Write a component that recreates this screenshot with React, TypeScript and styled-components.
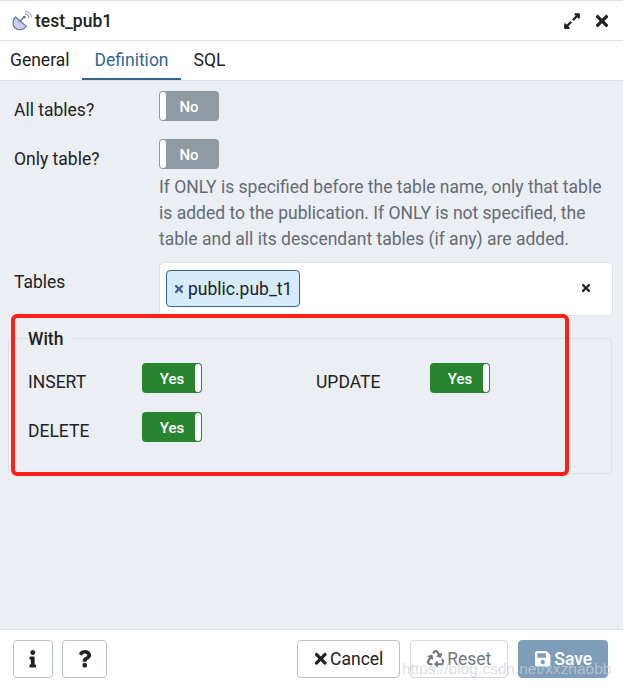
import React from "react";
import styled, { createGlobalStyle } from "styled-components";
import { FaExpandAlt, FaTimes, FaInfo, FaQuestion, FaRecycle, FaSave } from "react-icons/fa";

const Global = createGlobalStyle`
  html, body { margin: 0; padding: 0; background: #fff; }
  body { font-family: Roboto, "Liberation Sans", sans-serif; color: #222; font-size: 17.5px; }
  #root { width: 625px; height: 688px; }
`;

const Dialog = styled.div`
  position: relative;
  width: 623px;
  height: 688px;
  display: flex;
  flex-direction: column;
  box-sizing: border-box;
  border-top: 1px solid #dde0e6;
  overflow: hidden;
`;

const Header = styled.div`
  height: 39px;
  flex: none;
  display: flex;
  align-items: center;
  padding: 0 12px 0 12px;
  border-bottom: 1px solid #dde0e6;
  background: #fff;
`;

const Title = styled.div`
  flex: 1;
  display: flex;
  align-items: center;
  gap: 3px;
  font-weight: 500;
  color: #222;
`;

const HeaderIcons = styled.div`
  display: flex;
  align-items: center;
  gap: 12px;
  color: #222;
  font-size: 18px;
`;

const Tabs = styled.div`
  height: 39px;
  flex: none;
  display: flex;
  border-bottom: 1px solid #dde0e6;
  background: #fff;
`;

const Tab = styled.div<{ $active?: boolean }>`
  box-sizing: border-box;
  height: 39px;
  padding: 0 12px 0 13px;
  display: flex;
  align-items: center;
  color: ${p => (p.$active ? "#326690" : "#222")};
  border-bottom: 2px solid ${p => (p.$active ? "#326690" : "transparent")};
  &:first-child {
    padding: 0 12px 0 10px;
  }
`;

const Body = styled.div`
  flex: 1;
  background: #ebeef3;
  box-sizing: border-box;
  padding: 10px 10px 0 14px;
  display: flex;
  flex-direction: column;
`;

const Row = styled.div<{ $h: number }>`
  display: flex;
  align-items: flex-start;
  min-height: ${p => p.$h}px;
`;

const Label = styled.div<{ $top?: number }>`
  width: 145px;
  flex: none;
  line-height: 20px;
  padding-top: ${p => p.$top ?? 10}px;
  color: #222;
`;

const SwitchBox = styled.div<{ $on?: boolean }>`
  position: relative;
  box-sizing: border-box;
  width: 60px;
  height: 30px;
  flex: none;
  border-radius: 4px;
  background: ${p => (p.$on ? "#26852e" : "#8f9aa5")};
  color: #fff;
  font-size: 15px;
  font-weight: 500;
  display: flex;
  align-items: center;
  justify-content: center;
  padding-top: 1px;
`;

const Knob = styled.span<{ $on?: boolean }>`
  position: absolute;
  top: 1px;
  bottom: 1px;
  width: 6px;
  background: #fff;
  border-radius: 3px;
  ${p => (p.$on ? "right: 1px;" : "left: 1px;")}
`;

const Switch = ({ on }: { on?: boolean }) => (
  <SwitchBox $on={on}>
    {on ? "Yes" : "No"}
    <Knob $on={on} />
  </SwitchBox>
);

const Field = styled.div`
  display: flex;
  flex-direction: column;
`;

const Help = styled.div`
  width: 454px;
  line-height: 26px;
  color: #646b73;
  margin-top: 5px;
`;

const TablesBox = styled.div`
  box-sizing: border-box;
  width: 454px;
  height: 54px;
  background: #fff;
  border: 1px solid #dde0e6;
  border-radius: 4px;
  display: flex;
  align-items: center;
  justify-content: space-between;
  padding: 0 20px 0 6px;
`;

const Chip = styled.div`
  box-sizing: border-box;
  height: 37px;
  display: flex;
  align-items: center;
  gap: 3px;
  padding: 0 7px 0 6px;
  background: #d6ebfb;
  border: 1px solid #326690;
  border-radius: 4px;
  color: #222;
  margin-top: -1px;
`;

const ChipX = styled.span`
  display: flex;
  color: #326690;
  font-size: 12px;
`;

const ClearX = styled.span`
  display: flex;
  color: #222;
  font-size: 12px;
  margin-top: -2px;
`;

const Fieldset = styled.fieldset`
  box-sizing: border-box;
  width: 604px;
  height: 147px;
  margin: 11px 0 0 -6px;
  padding: 3px 0 0 19px;
  border: 1px solid #dde0e6;
  border-radius: 4px;
  min-width: 0;
`;

const Legend = styled.legend`
  font-weight: 500;
  padding: 2px 7px 0 0;
  color: #222;
  line-height: 20px;
`;

const OptionGrid = styled.div`
  display: grid;
  grid-template-columns: 288px 1fr;
  grid-auto-rows: 49px;
  margin-top: 11px;
`;

const Option = styled.div`
  display: flex;
  align-items: flex-start;
`;

const OptionLabel = styled.div`
  width: 114px;
  flex: none;
  line-height: 20px;
  padding-top: 9px;
  color: #222;
`;

const Footer = styled.div`
  height: 59px;
  flex: none;
  box-sizing: border-box;
  background: #fff;
  border-top: 1px solid #dde0e6;
  display: flex;
  align-items: flex-start;
  justify-content: space-between;
  padding: 10px 15px 0 13px;
`;

const ButtonGroup = styled.div<{ $gap: number }>`
  display: flex;
  gap: ${p => p.$gap}px;
`;

const Button = styled.div<{ $w: number; $variant?: "disabled" | "primary"; $tight?: boolean }>`
  box-sizing: border-box;
  width: ${p => p.$w}px;
  height: 38px;
  display: flex;
  align-items: center;
  justify-content: center;
  gap: ${p => (p.$tight ? 1 : 3)}px;
  padding-right: ${p => (p.$tight ? 2 : 0)}px;
  border-radius: 4px;
  border: 1px solid
    ${p => (p.$variant === "disabled" ? "#d4d7e0" : p.$variant === "primary" ? "#7d9db8" : "#b9bfce")};
  background: ${p => (p.$variant === "primary" ? "#7d9db8" : "#fff")};
  color: ${p => (p.$variant === "disabled" ? "#72767b" : p.$variant === "primary" ? "#fff" : "#222")};
  font-weight: ${p => (p.$variant === "primary" ? 500 : 400)};
`;

const Annotation = styled.div`
  position: absolute;
  left: 11px;
  top: 313px;
  width: 558px;
  height: 162px;
  box-sizing: border-box;
  border: 4px solid #fd2019;
  border-radius: 6px;
  pointer-events: none;
`;

const Watermark = styled.div`
  position: absolute;
  left: 402px;
  top: 659px;
  font-family: "Liberation Sans", sans-serif;
  font-size: 15.5px;
  color: rgba(205, 210, 215, 0.72);
  white-space: nowrap;
  pointer-events: none;
`;

const Dish = () => (
  <svg width="20" height="20" viewBox="0 0 20 20" fill="none">
    <path d="M3.5 6 L14.5 15.5 C11.5 19.5 5.5 19.8 2.6 16.6 C0 13.5 0.8 8.8 3.5 6 Z" fill="#c9cfe9" stroke="#5a6bb0" strokeWidth="1.1" />
    <path d="M7.5 11 L11.5 6.5" stroke="#5a6bb0" strokeWidth="1.2" />
    <circle cx="12.3" cy="6" r="1.3" fill="#4a5a9f" />
    <path d="M13 2.8 C15.2 3.1 16.8 4.8 17 7" stroke="#5a6bb0" strokeWidth="1" />
    <path d="M13.5 0.4 C16.8 0.7 19.1 3 19.5 6.4" stroke="#8c97c8" strokeWidth="1" />
  </svg>
);

export default function App() {
  return (
    <>
      <Global />
      <Dialog>
        <Header>
          <Title>
            <Dish />
            test_pub1
          </Title>
          <HeaderIcons>
            <FaExpandAlt />
            <FaTimes />
          </HeaderIcons>
        </Header>
        <Tabs>
          <Tab>General</Tab>
          <Tab $active>Definition</Tab>
          <Tab>SQL</Tab>
        </Tabs>
        <Body>
          <Row $h={48}>
            <Label $top={9}>All tables?</Label>
            <Switch />
          </Row>
          <Row $h={123}>
            <Label>Only table?</Label>
            <Field>
              <Switch />
              <Help>
                If ONLY is specified before the table name, only that table is added to the publication. If ONLY is not specified, the table and all its descendant tables (if any) are added.
              </Help>
            </Field>
          </Row>
          <Row $h={54}>
            <Label>Tables</Label>
            <TablesBox>
              <Chip>
                <ChipX><FaTimes /></ChipX>
                public.pub_t1
              </Chip>
              <ClearX><FaTimes /></ClearX>
            </TablesBox>
          </Row>
          <Fieldset>
            <Legend>With</Legend>
            <OptionGrid>
              <Option>
                <OptionLabel>INSERT</OptionLabel>
                <Switch on />
              </Option>
              <Option>
                <OptionLabel>UPDATE</OptionLabel>
                <Switch on />
              </Option>
              <Option>
                <OptionLabel>DELETE</OptionLabel>
                <Switch on />
              </Option>
            </OptionGrid>
          </Fieldset>
        </Body>
        <Footer>
          <ButtonGroup $gap={9}>
            <Button $w={40}><FaInfo /></Button>
            <Button $w={45}><FaQuestion /></Button>
          </ButtonGroup>
          <ButtonGroup $gap={10}>
            <Button $w={103} $tight><FaTimes />Cancel</Button>
            <Button $w={98} $variant="disabled"><FaRecycle />Reset</Button>
            <Button $w={90} $variant="primary"><FaSave />Save</Button>
          </ButtonGroup>
        </Footer>
        <Annotation />
        <Watermark>https://blog.csdn.net/xxzhaobb</Watermark>
      </Dialog>
    </>
  );
}
